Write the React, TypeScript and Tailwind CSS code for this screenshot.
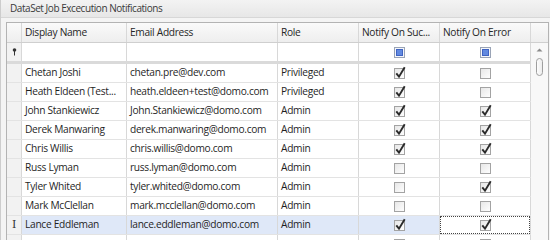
type Row = {
  name: string
  email: string
  role: string
  success: boolean
  error: boolean
}

const rows: Row[] = [
  { name: "Chetan Joshi", email: "chetan.pre@dev.com", role: "Privileged", success: true, error: false },
  { name: "Heath Eldeen (Test...", email: "heath.eldeen+test@domo.com", role: "Privileged", success: true, error: false },
  { name: "John Stankiewicz", email: "John.Stankiewicz@domo.com", role: "Admin", success: true, error: true },
  { name: "Derek Manwaring", email: "derek.manwaring@domo.com", role: "Admin", success: true, error: true },
  { name: "Chris Willis", email: "chris.willis@domo.com", role: "Admin", success: true, error: true },
  { name: "Russ Lyman", email: "russ.lyman@domo.com", role: "Admin", success: false, error: false },
  { name: "Tyler Whited", email: "tyler.whited@domo.com", role: "Admin", success: false, error: true },
  { name: "Mark McClellan", email: "mark.mcclellan@domo.com", role: "Admin", success: false, error: false },
  { name: "Lance Eddleman", email: "lance.eddleman@domo.com", role: "Admin", success: true, error: true },
  { name: "", email: "", role: "", success: false, error: false },
]

const SELECTED = 8

function Check({ checked }: { checked: boolean }) {
  return (
    <svg width="13" height="13" viewBox="0 0 13 13" className="ml-[2px] -mt-[2px]">
      <defs>
        <linearGradient id="cb" x1="0" y1="0" x2="1" y2="1">
          <stop offset="0" stopColor="#e6e6e6" />
          <stop offset="1" stopColor="#ffffff" />
        </linearGradient>
      </defs>
      <rect x="0.5" y="2.5" width="10" height="10" fill="url(#cb)" stroke="#a3a3a3" />
      {checked && (
        <path d="M2.3 7.3 L5 10.7 L10.7 1.3" fill="none" stroke="#2a2a2a" strokeWidth="1.9" />
      )}
    </svg>
  )
}

function Indeterminate() {
  return (
    <svg width="11" height="11" viewBox="0 0 11 11">
      <rect x="0.5" y="0.5" width="10" height="10" fill="#f4f6fa" stroke="#9aa4b6" />
      <rect x="2.5" y="2.5" width="6" height="6" fill="#6189e0" stroke="#3f63c2" />
    </svg>
  )
}

function FilterPin() {
  return (
    <svg width="5" height="8" viewBox="0 0 5 8">
      <circle cx="2.5" cy="2" r="1.8" fill="#333" />
      <rect x="2" y="3" width="1" height="4.5" fill="#333" />
    </svg>
  )
}

const cell = "border-r border-[#d8d8d8] shrink-0 flex items-center"

export default function App() {
  return (
    <div className="w-[550px] h-[240px] overflow-hidden bg-[#f4f4f4] border-l border-[#cdcdcd] font-['Open_Sans',sans-serif] text-[10.2px] tracking-[-0.3px] text-[#1f1f1f]">
      <div className="h-[18px] bg-gradient-to-b from-[#f3f3f3] to-[#e7e7e7] border-b border-[#d7d7d7] pl-[9px] leading-[17px] text-[10px] tracking-[-0.45px] text-[#3a3a3a]">
        DataSet Job Excecution Notifications
      </div>

      <div className="pl-[5px] pt-[4px]">
        <div className="w-[543px] border border-[#b3b3b3] bg-white">
          {/* header */}
          <div className="h-[20px] flex border-b border-[#cfcfcf] bg-gradient-to-b from-[#fafafa] to-[#eeeeee] text-[#262626]">
            <div className={`${cell} w-[15px]`} />
            <div className={`${cell} w-[105px] pl-[3px]`}>Display Name</div>
            <div className={`${cell} w-[151px] pl-[3px]`}>Email Address</div>
            <div className={`${cell} w-[81px] pl-[3px]`}>Role</div>
            <div className={`${cell} w-[81px] pl-[3px] whitespace-nowrap overflow-hidden`}>Notify On Suc...</div>
            <div className={`${cell} w-[91px] pl-[3px] whitespace-nowrap`}>Notify On Error</div>
            <div className="w-[17px]" />
          </div>

          <div className="flex">
            <div className="w-[524px]">
              {/* auto filter row */}
              <div className="h-[21px] flex border-b-[3px] border-[#dadada]">
                <div className={`${cell} w-[15px] bg-[#f2f2f2] pl-[5px]`}>
                  <FilterPin />
                </div>
                <div className={`${cell} w-[105px]`} />
                <div className={`${cell} w-[151px]`} />
                <div className={`${cell} w-[81px]`} />
                <div className={`${cell} w-[81px] justify-center`}>
                  <Indeterminate />
                </div>
                <div className={`${cell} w-[91px] justify-center`}>
                  <Indeterminate />
                </div>
              </div>

              {rows.map((r, i) => {
                const sel = i === SELECTED
                const bg = sel ? "bg-[#dfe8f8]" : ""
                return (
                  <div key={i} className="h-[19px] flex border-b border-[#e3e3e3]">
                    <div className={`${cell} w-[15px] bg-[#f2f2f2] justify-center`}>
                      {sel && <span className="font-['DejaVu_Serif',serif] text-[11px] text-[#333]">I</span>}
                    </div>
                    <div className={`${cell} w-[105px] pl-[3px] whitespace-nowrap overflow-hidden ${bg}`}>{r.name}</div>
                    <div className={`${cell} w-[151px] pl-[3px] whitespace-nowrap overflow-hidden ${bg}`}>{r.email}</div>
                    <div className={`${cell} w-[81px] pl-[3px] ${bg}`}>{r.role}</div>
                    <div className={`${cell} w-[81px] justify-center ${bg}`}>
                      <Check checked={r.success} />
                    </div>
                    <div className={`${cell} w-[91px]`}>
                      <div className={`w-full h-full flex items-center justify-center ${sel ? "border border-dotted border-[#444]" : ""}`}>
                        <Check checked={r.error} />
                      </div>
                    </div>
                  </div>
                )
              })}
            </div>

            {/* vertical scrollbar */}
            <div className="w-[17px] bg-[#f8f8f8] flex flex-col items-center">
              <svg width="7" height="4" viewBox="0 0 7 4" className="mt-[5px]">
                <path d="M0.5 3.5 L3.5 0.5 L6.5 3.5 Z" fill="#8a8a8a" />
              </svg>
              <div className="mt-[6px] w-[7px] h-[18px] rounded-full border border-[#9e9e9e] bg-gradient-to-r from-[#fdfdfd] to-[#ececec]" />
            </div>
          </div>
        </div>
      </div>
    </div>
  )
}
